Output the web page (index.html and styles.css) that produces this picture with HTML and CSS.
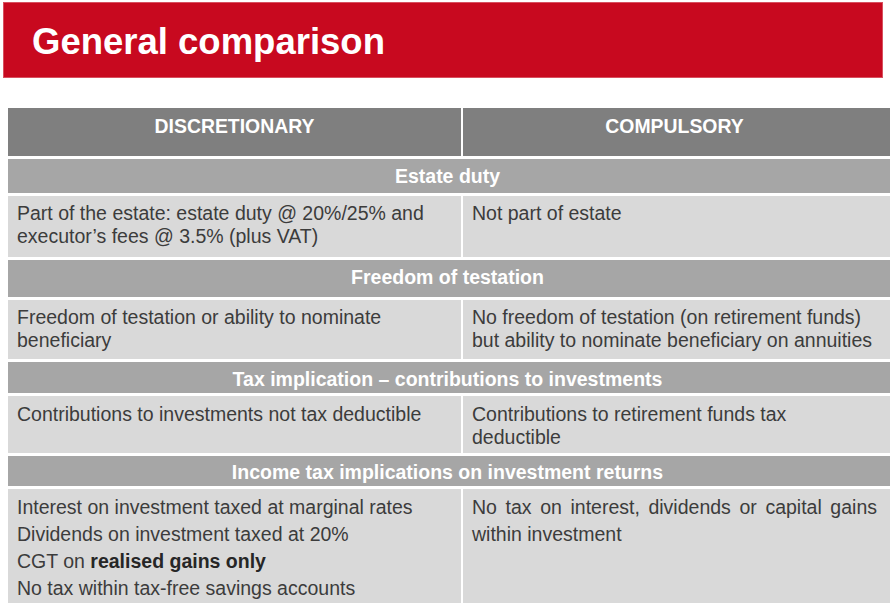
FILE: index.html
```html
<!DOCTYPE html>
<html lang="en">
<head>
<meta charset="utf-8">
<title>General comparison</title>
<link rel="stylesheet" href="styles.css">
</head>
<body>
<header class="banner">
  <h1 class="title">General comparison</h1>
</header>
<main class="table">
  <div class="cell head">DISCRETIONARY</div>
  <div class="cell head head-right">COMPULSORY</div>

  <div class="section sec-estate">Estate duty</div>
  <div class="cell body row-estate">Part of the estate: estate duty @ 20%/25% and executor’s fees @ 3.5% (plus VAT)</div>
  <div class="cell body body-right row-estate">Not part of estate</div>

  <div class="section sec-freedom">Freedom of testation</div>
  <div class="cell body row-freedom">Freedom of testation or ability to nominate beneficiary</div>
  <div class="cell body body-right row-freedom">No freedom of testation (on retirement funds) but ability to nominate beneficiary on annuities</div>

  <div class="section sec-tax">Tax implication – contributions to investments</div>
  <div class="cell body row-tax">Contributions to investments not tax deductible</div>
  <div class="cell body body-right row-tax">Contributions to retirement funds tax deductible</div>

  <div class="section sec-income">Income tax implications on investment returns</div>
  <div class="cell body loose row-income">
    <p class="line">Interest on investment taxed at marginal rates</p>
    <p class="line">Dividends on investment taxed at 20%</p>
    <p class="line">CGT on <strong class="strong">realised gains only</strong></p>
    <p class="line">No tax within tax-free savings accounts</p>
  </div>
  <div class="cell body body-right loose justify row-income">No tax on interest, dividends or capital gains within investment</div>
</main>
</body>
</html>
```

FILE: styles.css
```css
html, body {
  margin: 0;
  padding: 0;
  background: #ffffff;
}

body {
  width: 890px;
  height: 603px;
  overflow: hidden;
  font-family: "Liberation Sans", Arial, sans-serif;
}

.banner {
  margin: 2px 7px 0 3px;
  height: 76px;
  background: #c8091f;
  display: flex;
  align-items: center;
  padding: 3px 0 0 29px;
  box-sizing: border-box;
  box-shadow: inset 0 0 0 1px #d8505f;
}

.title {
  margin: 0;
  color: #ffffff;
  font-size: 36.5px;
  line-height: 40px;
  font-weight: bold;
}

.table {
  margin: 30px 0 0 8px;
  display: grid;
  grid-template-columns: 453px 427px;
  grid-template-rows: 48px 34px 61px 37px 59px 31px 57px 30px 130px;
  column-gap: 2px;
  row-gap: 3px;
}

.cell {
  box-sizing: border-box;
}

.head {
  background: #7f7f7f;
  color: #ffffff;
  font-weight: bold;
  font-size: 19.4px;
  line-height: 23px;
  text-align: center;
  padding-top: 7px;
}

.head-right {
  padding-right: 4px;
}

.section {
  grid-column: 1 / 3;
  background: #a6a6a6;
  color: #ffffff;
  font-weight: bold;
  font-size: 19.5px;
  display: flex;
  align-items: center;
  justify-content: center;
  box-sizing: border-box;
  padding-right: 3px;
}

.sec-freedom {
  padding-bottom: 3px;
}

.sec-tax {
  padding-top: 4px;
}

.sec-income {
  padding-top: 2px;
}

.body {
  background: #d9d9d9;
  color: #3c3c3c;
  font-size: 19.5px;
  line-height: 23px;
  padding: 6px 9px 0 9px;
}

.body-right {
  padding-right: 13px;
}

.row-tax {
  padding-top: 7px;
}

.loose {
  line-height: 27px;
  padding-top: 5px;
}

.justify {
  text-align: justify;
}

.line {
  margin: 0;
}

.strong {
  color: #262626;
  font-weight: bold;
}
```
